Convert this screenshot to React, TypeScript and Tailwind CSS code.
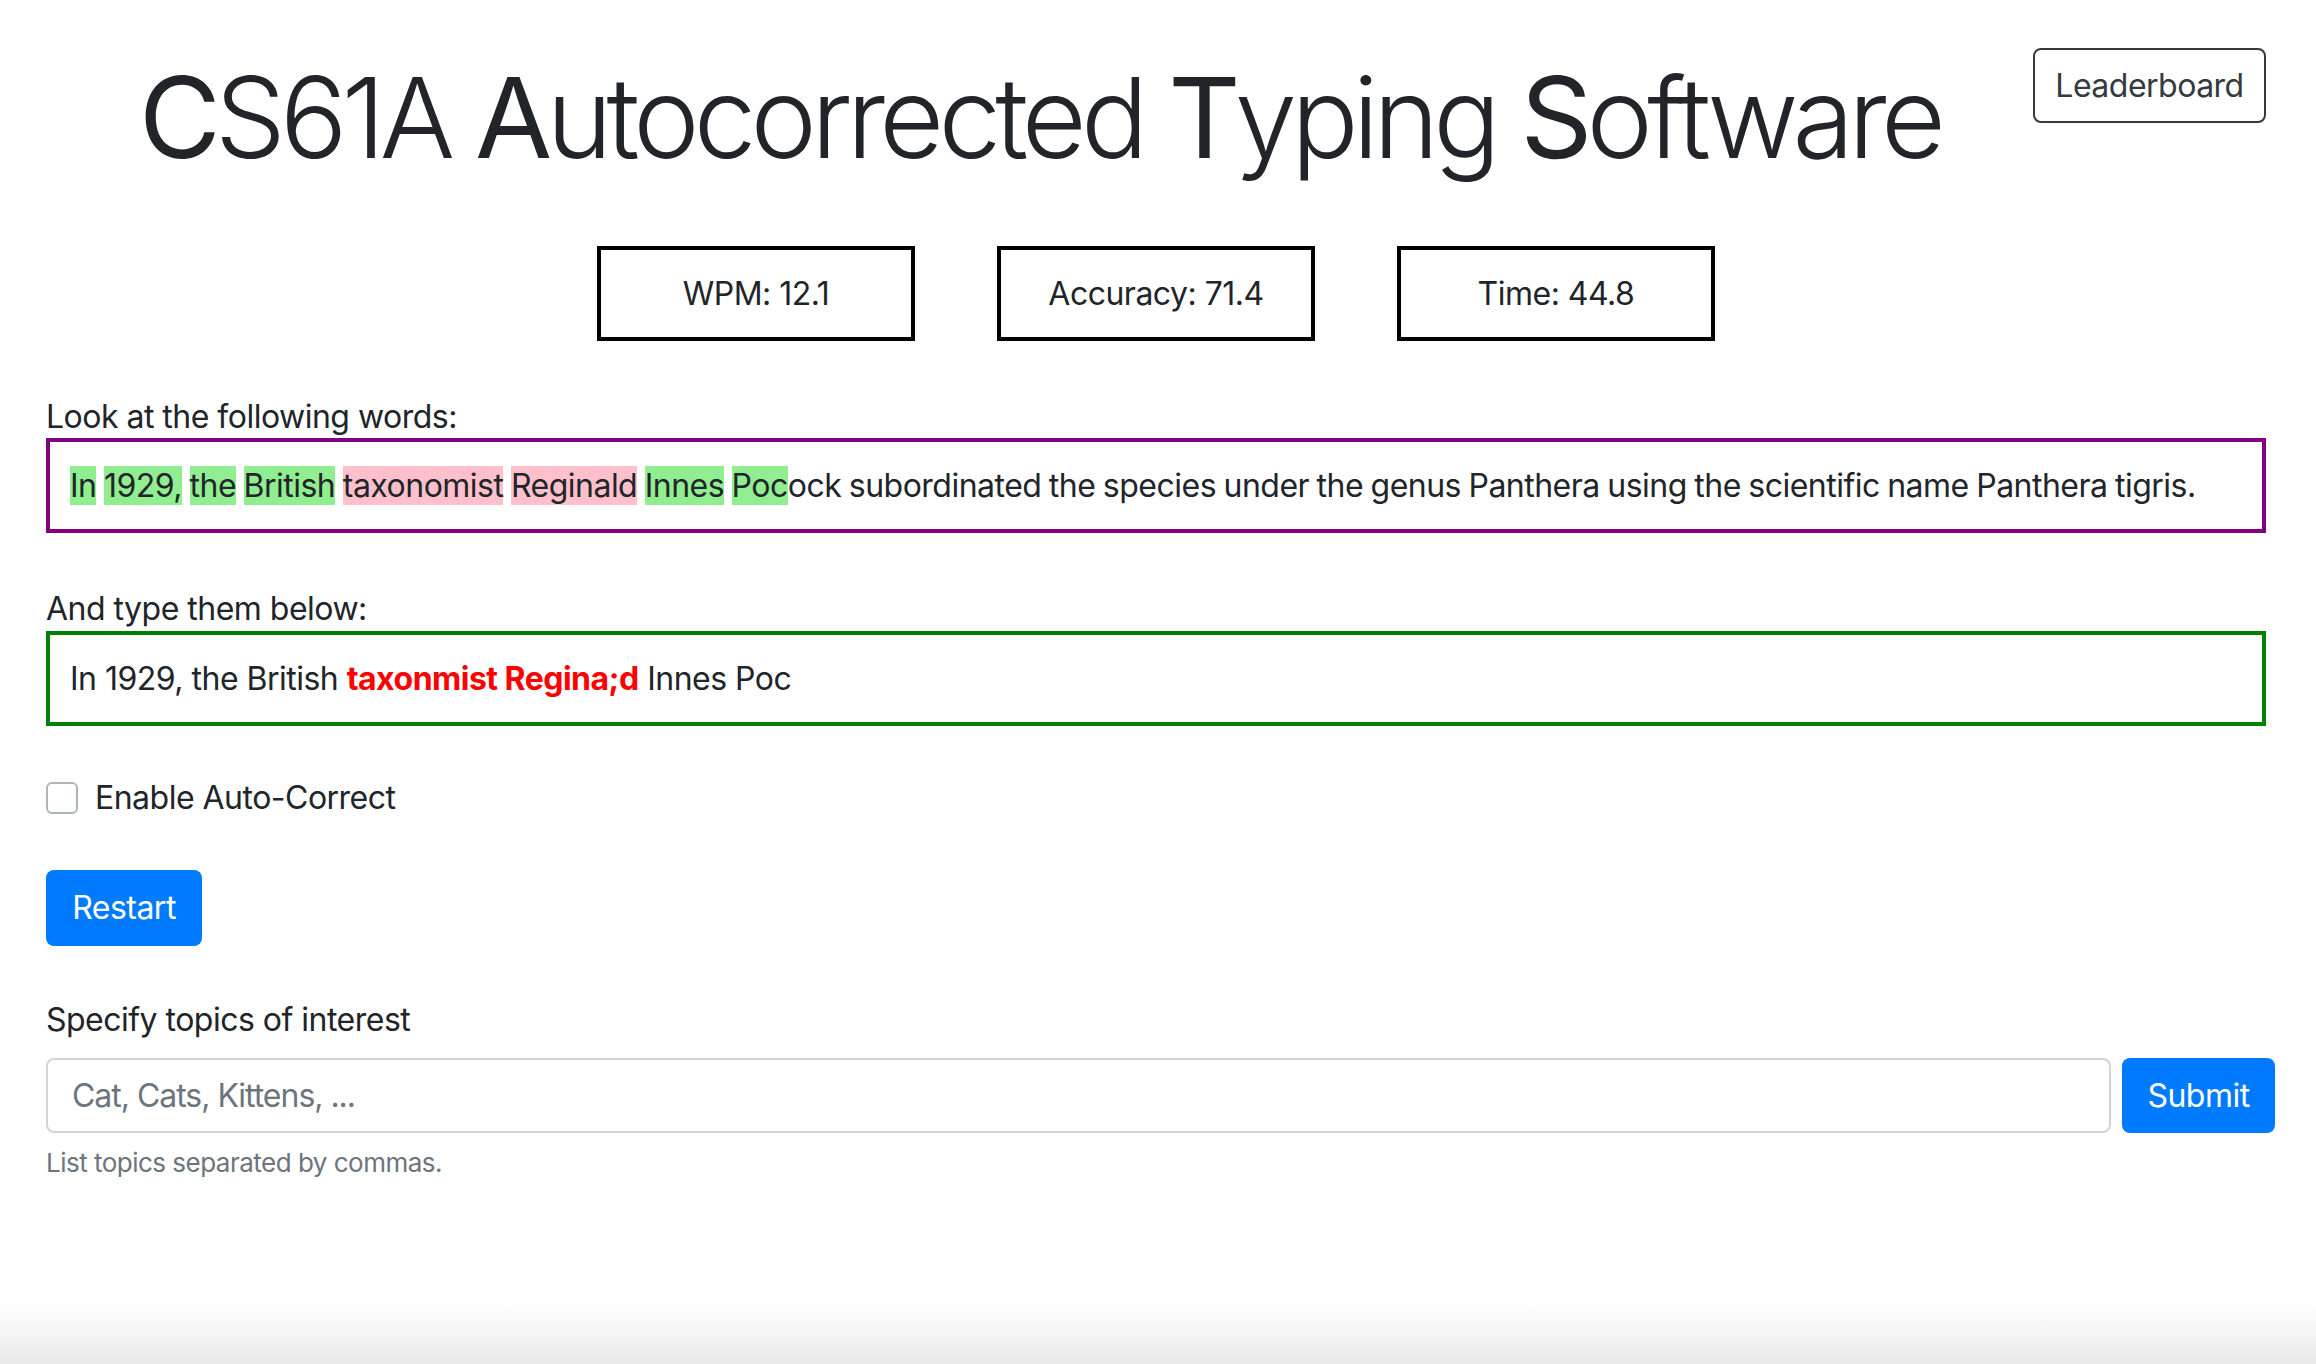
import { useState } from 'react'

// word highlight states for the prompt text
type Mark = 'ok' | 'bad'

const promptWords: { text: string; mark: Mark }[] = [
  { text: 'In', mark: 'ok' },
  { text: '1929,', mark: 'ok' },
  { text: 'the', mark: 'ok' },
  { text: 'British', mark: 'ok' },
  { text: 'taxonomist', mark: 'bad' },
  { text: 'Reginald', mark: 'bad' },
  { text: 'Innes', mark: 'ok' },
]

const stats = ['WPM: 12.1', 'Accuracy: 71.4', 'Time: 44.8']

export default function App() {
  const [autoCorrect, setAutoCorrect] = useState(false)
  const [topics, setTopics] = useState('')

  return (
    <div
      className="min-h-screen bg-white text-[#212529] relative tracking-[-0.032em]"
      style={{ fontFamily: 'Inter, "Noto Sans", sans-serif' }}
    >
      <div className="pl-[46px] pr-[50px] pt-[48px] pb-[120px]">
        {/* Header */}
        <div className="flex items-start">
          <h1 className="flex-1 text-center text-[112px] leading-[1.2] font-light mt-[2px] tracking-[-0.052em] whitespace-nowrap">
            <span className="font-normal">C</span>S61A <span className="font-normal">A</span>utocorrected{' '}
            <span className="font-normal">T</span>yping <span className="font-normal">S</span>oftware
          </h1>
          <button className="w-[233px] h-[75px] border-2 border-[#343a40] rounded-[8px] text-[32px] text-[#343a40] flex items-center justify-center">
            Leaderboard
          </button>
        </div>

        {/* Stats */}
        <div className="flex justify-center gap-[82px] mt-[62px]">
          {stats.map(s => (
            <div
              key={s}
              className="w-[318px] h-[95px] border-4 border-black flex items-center justify-center text-[32px]"
            >
              {s}
            </div>
          ))}
        </div>

        {/* Prompt */}
        <div className="mt-[56px] text-[32px] leading-[40px]">Look at the following words:</div>
        <div className="mt-[1px] h-[95px] border-4 border-[#800080] px-[20px] flex items-center text-[32px] leading-[48px] whitespace-nowrap overflow-hidden [word-spacing:-1px]">
          <span>
            {promptWords.map((w, i) => (
              <span key={i}>
                <span className={w.mark === 'ok' ? 'bg-[#90ee90]' : 'bg-[#ffc0cb]'}>{w.text}</span>{' '}
              </span>
            ))}
            <span className="bg-[#90ee90]">Poc</span>
            ock subordinated the species under the genus Panthera using the scientific name Panthera tigris.
          </span>
        </div>

        {/* Typed */}
        <div className="mt-[56px] text-[32px] leading-[40px]">And type them below:</div>
        <div className="mt-[2px] h-[95px] border-4 border-[#008000] px-[20px] flex items-center text-[32px] leading-[48px] whitespace-nowrap">
          <span>
            In 1929, the British <span className="font-bold text-[#ff0000]">taxonmist Regina;d</span> Innes Poc
          </span>
        </div>

        {/* Auto-correct toggle */}
        <label className="mt-[52px] h-[40px] flex items-center gap-[17px] text-[32px] leading-[40px] w-fit cursor-pointer">
          <span
            onClick={() => setAutoCorrect(!autoCorrect)}
            className={`w-[32px] h-[32px] rounded-[6px] border-2 ${
              autoCorrect ? 'bg-[#007bff] border-[#007bff]' : 'bg-white border-[#adb5bd]'
            }`}
          />
          Enable Auto-Correct
        </label>

        <button className="mt-[52px] w-[156px] h-[76px] bg-[#007bff] text-white rounded-[8px] text-[32px] flex items-center justify-center">
          Restart
        </button>

        {/* Topics */}
        <div className="mt-[54px] text-[32px] leading-[40px]">Specify topics of interest</div>
        <div className="mt-[18px] flex mr-[-9px] gap-[11px]">
          <input
            value={topics}
            onChange={e => setTopics(e.target.value)}
            placeholder="Cat, Cats, Kittens, ..."
            className="flex-1 h-[75px] border-2 border-[#ced4da] rounded-[8px] px-[24px] text-[32px] text-[#495057] placeholder:text-[#6c757d] outline-none tracking-[-0.032em]"
          />
          <button className="w-[153px] h-[75px] bg-[#007bff] text-white rounded-[8px] text-[32px] flex items-center justify-center">
            Submit
          </button>
        </div>
        <div className="mt-[10px] text-[26px] leading-[39px] text-[#6c757d]">List topics separated by commas.</div>
      </div>

      {/* window edge shading */}
      <div className="fixed bottom-0 left-0 right-0 h-[64px] bg-gradient-to-b from-transparent to-[#e9e9e9] pointer-events-none" />
    </div>
  )
}
